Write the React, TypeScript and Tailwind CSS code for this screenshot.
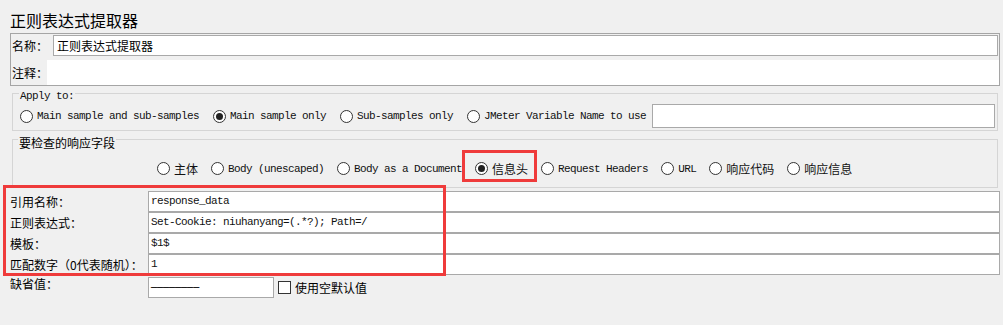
import React from 'react'

const cjk = "font-['Noto_Sans_CJK_SC',sans-serif]"
const mono = "font-['Liberation_Mono','Noto_Sans_CJK_SC',monospace] text-[11px] tracking-[-0.6px]"

function Radio({ label, checked, isMono }: { label: string; checked?: boolean; isMono?: boolean }) {
  return (
    <div className="flex items-center gap-[4px] h-[13px]">
      <span className="w-[13px] h-[13px] rounded-full border border-[#333] bg-white flex items-center justify-center shrink-0">
        {checked && <span className="w-[7px] h-[7px] rounded-full bg-[#222]" />}
      </span>
      <span className={`${isMono ? mono : `${cjk} text-[12px]`} leading-[14px] text-[#111] whitespace-nowrap`}>
        {label}
      </span>
    </div>
  )
}

function App() {
  const fields = [
    { label: '引用名称：', value: 'response_data' },
    { label: '正则表达式：', value: 'Set-Cookie: niuhanyang=(.*?); Path=/' },
    { label: '模板：', value: '$1$' },
    { label: '匹配数字（0代表随机）：', value: '1' },
  ]

  return (
    <div className={`relative w-[1003px] h-[325px] overflow-hidden bg-[#f0f0f0] text-black ${cjk}`}>
      {/* title */}
      <div className="h-[33px] pt-[9px] pl-[10px] text-[16px] leading-[22px]">正则表达式提取器</div>

      {/* name + comment */}
      <div className="ml-[10px] w-[990px] h-[53px] border border-[#a5a5a5]">
        <div className="mt-[1px] flex items-center h-[21px]">
          <div className="w-[42px] pl-[1px] text-[12px] leading-[14px] whitespace-nowrap">名称：</div>
          <div className="flex-1 mr-[1px] h-[21px] border border-[#a9a9a9] bg-white pl-[3px] text-[12px] leading-[19px]">
            正则表达式提取器
          </div>
        </div>
        <div className="mt-[4px] flex h-[25px]">
          <div className="w-[36px] shrink-0 pl-[1px] flex items-center text-[12px] leading-[14px] whitespace-nowrap overflow-hidden">注释：</div>
          <div className="flex-1 bg-white" />
        </div>
      </div>

      {/* Apply to */}
      <div className="relative mt-[7px] ml-[12px] w-[986px] h-[38px] border border-[#d5d5d5]">
        <span className={`absolute -top-[4px] left-[6px] px-[1px] bg-[#f0f0f0] ${mono} leading-[12px] text-[#111]`}>Apply to:</span>
        <div className="flex items-center pt-[10px] pl-[7px] pr-[2px]">
          <div className="flex items-center gap-[14px]">
            <Radio label="Main sample and sub-samples" isMono />
            <Radio label="Main sample only" checked isMono />
            <Radio label="Sub-samples only" isMono />
            <Radio label="JMeter Variable Name to use" isMono />
          </div>
          <div className="ml-[6px] flex-1 h-[24px] border border-[#a9a9a9] bg-white" />
        </div>
      </div>

      {/* field to check */}
      <div className="relative mt-[8px] ml-[12px] w-[986px] h-[49px] border border-[#d5d5d5]">
        <span className="absolute -top-[4px] left-[5px] px-[1px] bg-[#f0f0f0] text-[12px] leading-[14px]">要检查的响应字段</span>
        <div className="flex items-center gap-[13px] pt-[22px] pl-[144px]">
          <Radio label="主体" />
          <Radio label="Body (unescaped)" isMono />
          <Radio label="Body as a Document" isMono />
          <Radio label="信息头" checked />
          <Radio label="Request Headers" isMono />
          <Radio label="URL" isMono />
          <Radio label="响应代码" />
          <Radio label="响应信息" />
        </div>
      </div>

      {/* regex fields */}
      <div className="mt-[3px]">
        {fields.map((f) => (
          <div key={f.label} className="flex items-center h-[21px]">
            <div className="w-[148px] pl-[10px] text-[12px] leading-[14px] whitespace-nowrap">{f.label}</div>
            <div className={`flex-1 mr-[3px] h-[21px] border border-[#a9a9a9] bg-white pl-[2px] ${mono} leading-[19px] text-[#111]`}>
              {f.value}
            </div>
          </div>
        ))}
      </div>

      {/* default value */}
      <div className="mt-[2px] flex items-center h-[21px]">
        <div className="w-[148px] pl-[10px] self-start text-[12px] leading-[14px]">缺省值：</div>
        <div className="w-[126px] h-[21px] border border-[#a9a9a9] bg-white pl-[2px] font-['DejaVu_Sans_Mono',monospace] text-[10px] leading-[19px]">
          ────────
        </div>
        <span className="ml-[4px] w-[13px] h-[13px] border border-[#333] bg-white" />
        <span className="ml-[4px] text-[12px] leading-[14px]">使用空默认值</span>
      </div>

      {/* red annotation boxes */}
      <div className="absolute left-[462px] top-[150px] w-[75px] h-[32px] border-[3px] border-[#ef3b3b]" />
      <div className="absolute left-[3px] top-[185px] w-[443px] h-[91px] border-[3px] border-[#ef3b3b]" />
    </div>
  )
}

export default App
